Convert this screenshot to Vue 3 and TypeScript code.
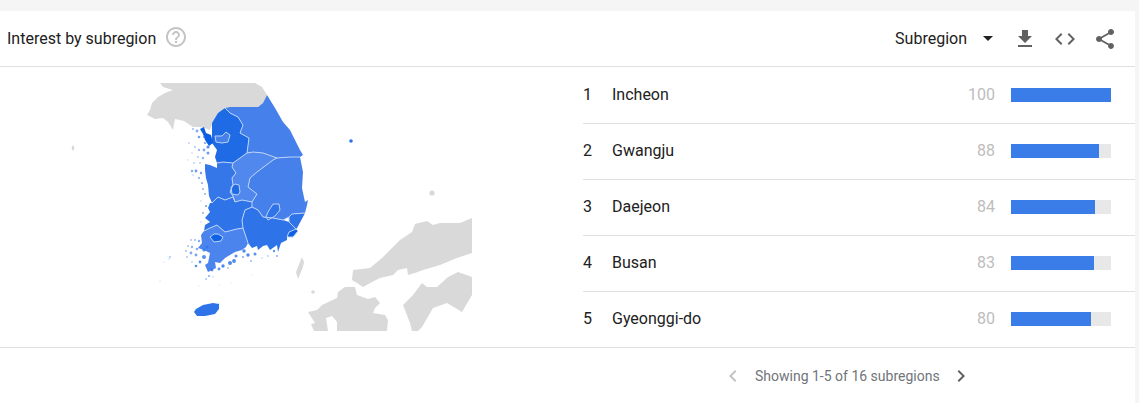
<script setup lang="ts">
interface Row { rank: number; name: string; value: number }
const rows: Row[] = [
  { rank: 1, name: 'Incheon', value: 100 },
  { rank: 2, name: 'Gwangju', value: 88 },
  { rank: 3, name: 'Daejeon', value: 84 },
  { rank: 4, name: 'Busan', value: 83 },
  { rank: 5, name: 'Gyeonggi-do', value: 80 },
]
const specks: [number, number, number, number][] = [
  [197,131,1.4,.6],[193,129,1,.5],[199,137,1.3,.7],[204,137,1,.7],[208,147,1.6,.8],[205,143,1,.7],[189,143,.9,.35],[195,147,1.1,.4],[199,150,1.2,.5],[204,150,1.4,.6],
  [208,153,1.5,.7],[192,153,.8,.3],[198,157,1,.4],[203,158,1.2,.55],[188,160,.7,.3],[194,163,.9,.35],[200,163,.9,.4],[192,171,1.2,.6],[196,171,1.4,.7],[201,173,1.2,.7],
  [193,175,.8,.4],[199,178,1.1,.6],[202,183,1,.6],[203,189,.9,.6],[205,194,.9,.6],[201,201,.7,.4],[206,206,1,.7],[203,213,.9,.6],[201,222,.7,.4],
  [191,240,.9,.45],[195,240,1,.5],[199,241,1.2,.6],[188,246,.9,.45],[192,247,1.2,.55],[197,249,1.3,.6],[186,251,1,.45],[191,253,1.4,.6],[196,255,1.4,.65],[187,257,.9,.45],
  [204,250,1.6,.8],[207,247,1.4,.75],[204,257,2,.8],[200,262,1.4,.8],[196,266,1.3,.8],[192,262,.8,.5],[170,257,.9,.45],[169,259,.7,.35],[168,256,.6,.3],
  [209,276,1.1,.55],[206,279,.9,.45],[212,270,1.4,.8],[219,269,1.4,.8],[223,266,1.7,.85],[213,277,.8,.35],[230,263,2,.85],[234,261,1.9,.85],[228,268,.9,.45],[236,256,1.5,.8],
  [244,251,1.7,.85],[248,255,1.7,.85],[243,257,1,.65],[255,254,1.5,.8],[251,261,.9,.55],[262,258,.7,.45],[268,256,.8,.55],[274,251,1.2,.75],[277,256,.9,.65],
  [160,281,.6,.3],[164,262,.6,.3],[199,286,.5,.3],[219,303,.6,.4],[219,285,.5,.3],[231,283,.5,.3],[252,275,.5,.3],
]
</script>

<template>
  <div class="page">
    <section class="card">
      <header class="head">
        <div class="title-wrap">
          <h2 class="title">Interest by subregion</h2>
          <svg class="icon help" viewBox="0 0 24 24"><path d="M11 18h2v-2h-2v2zm1-16C6.48 2 2 6.48 2 12s4.48 10 10 10 10-4.48 10-10S17.52 2 12 2zm0 18c-4.41 0-8-3.59-8-8s3.59-8 8-8 8 3.59 8 8-3.59 8-8 8zm0-14c-2.21 0-4 1.79-4 4h2c0-1.1.9-2 2-2s2 .9 2 2c0 2-3 1.75-3 5h2c0-2.25 3-2.5 3-5 0-2.21-1.79-4-4-4z"/></svg>
        </div>
        <div class="tools">
          <span class="select-label">Subregion</span>
          <span class="caret"></span>
          <svg class="icon tool" viewBox="0 0 24 24"><path d="M19 9h-4V3H9v6H5l7 7 7-7zM5 18v2h14v-2H5z"/></svg>
          <svg class="icon tool" viewBox="0 0 24 24"><path d="M9.4 16.6L4.8 12l4.6-4.6L8 6l-6 6 6 6 1.4-1.4zm5.2 0l4.6-4.6-4.6-4.6L16 6l6 6-6 6-1.4-1.4z"/></svg>
          <svg class="icon tool" viewBox="0 0 24 24"><path d="M18 16.08c-.76 0-1.44.3-1.96.77L8.91 12.7c.05-.23.09-.46.09-.7s-.04-.47-.09-.7l7.05-4.11c.54.5 1.25.81 2.04.81 1.66 0 3-1.34 3-3s-1.34-3-3-3-3 1.34-3 3c0 .24.04.47.09.7L8.04 9.81C7.5 9.31 6.79 9 6 9c-1.66 0-3 1.34-3 3s1.34 3 3 3c.79 0 1.5-.31 2.04-.81l7.12 4.16c-.05.21-.08.43-.08.65 0 1.61 1.31 2.92 2.92 2.92 1.61 0 2.92-1.31 2.92-2.92s-1.31-2.92-2.92-2.92z"/></svg>
        </div>
      </header>

      <div class="body">
        <div class="map-cell">
          <svg class="map" viewBox="0 67 583 280" width="583" height="280">
            <g fill="#d9d9d9">
              <path d="M160 83L255 83L262 87L267 95L263 103L258 107L230 107L225 108L220 113L212 125L210 130L205 128L199 127L193 127L184 121L175 119L173 130L168 122L163 118L155 119L147 115L150 110L152 103L158 97L165 93L173 90L163 87Z"/>
              <path d="M472 218L460 223L440 223L433 225L427 221L415 224L412 232L400 240L390 250L382 258L370 268L353 270L352 280L357 283L363 287L372 282L380 278L393 275L398 270L407 268L408 275L415 273L423 270L440 265L457 258L472 253Z"/>
              <path d="M472 277L458 272L448 277L437 287L427 287L422 283L413 295L403 305L410 323L412 331L418 331L422 327L433 308L447 303L462 312L472 295Z"/>
              <path d="M355 287L345 287L338 292L337 298L322 305L317 310L308 312L315 323L311 324L314 331L328 331L326 318L332 316L337 322L337 331L387 331L388 320L385 315L373 313L375 308L380 303L375 297L368 299L357 295Z"/>
              <path d="M302 257L304 262L303 267L298 279L296 272L300 262Z"/>
              <circle cx="432" cy="193" r="2.6"/>
              <circle cx="313" cy="292" r="1.8"/>
              <ellipse cx="73" cy="148" rx="1.3" ry="2.6"/>
            </g>
            <g>
              <path fill="#4680ea" d="M225 108L230 107L258 107L263 103L267 95L275 108L283 122L290 130L295 140L300 150L303 155L300 157L290 157L277 158L263 153L253 152L247 153L249 138L240 133L243 125L238 117L230 113Z"/>
              <path fill="#1f6be6" d="M225 108L230 113L238 117L243 125L240 133L249 138L247 153L233 163L223 162L217 163L215 157L217 150L212 143L212 123L218 113Z"/>
              <path fill="#4680ea" d="M277 158L290 157L300 157L303 172L302 188L305 202L308 200L307 205L305 213L292 214L289 217L283 220L273 218L263 217L258 210L252 207L252 202L257 194L248 187L250 178L257 172L273 160Z"/>
              <path fill="#5088ed" d="M247 153L253 152L263 153L277 158L273 160L257 172L250 178L248 187L257 194L252 202L242 200L235 202L233 196L230 192L233 185L232 178L236 173L232 167L233 163Z"/>
              <path fill="#3577e9" d="M217 163L223 162L233 163L232 167L236 173L232 178L233 185L230 192L233 196L235 202L233 197L225 200L218 197L212 203L209 196L208 185L206 178L205 170L205 164L210 165L217 168Z"/>
              <path fill="#2f73e8" d="M212 203L218 197L225 200L233 197L235 202L242 200L252 202L252 207L245 210L242 220L243 228L237 229L225 232L217 225L210 228L204 231L205 225L210 222L205 218L210 212L208 208L210 203Z"/>
              <path fill="#2f73e8" d="M245 210L252 207L258 210L263 217L273 218L283 220L289 222L296 229L293 237L287 237L287 240L281 243L278 252L277 245L270 250L267 245L263 246L258 250L257 246L252 248L248 243L243 228L242 220Z"/>
              <path fill="#4a84ec" d="M204 231L210 228L217 225L225 232L237 229L243 228L248 243L246 247L242 250L235 252L225 258L220 263L215 262L216 268L208 272L205 265L208 263L210 253L204 250L198 248L202 243L201 235Z"/>
              <path fill="#2f73e8" d="M289 217L292 214L305 213L303 217L297 228L296 229L289 222Z"/>
              <path fill="#0f62e6" d="M287 237L289 232L296 229L298 231L293 237Z"/>
              <path fill="#2f73e8" d="M268 212L273 204L279 204L280 210L275 216L268 220L266 217Z"/>
              <path fill="#1f6be6" d="M231 187L235 184L239 185L240 192L238 195L232 194Z"/>
              <path fill="#0f62e6" d="M210 237L214 234L218 234L223 237L221 241L214 242Z"/>
              <path fill="#4680ea" d="M215 136L222 136L226 132L230 135L228 142L222 143L216 142Z"/>
              <path fill="#0b5fe6" d="M200 129L204 127L206 133L211 135L213 143L209 146L205 140L203 134Z"/>
            </g>
            <g class="borders">
              <path d="M225 108L230 113L238 117L243 125L240 133L249 138L247 153L233 163L223 162L217 163"/>
              <path d="M247 153L253 152L263 153L277 158L290 157L300 157"/>
              <path d="M277 158L273 160L257 172L250 178L248 187L257 194L252 202L252 207L258 210L263 217L273 218L283 220L289 217L292 214L305 213"/>
              <path d="M233 163L232 167L236 173L232 178L233 185L230 192L233 196L235 202L242 200L252 202"/>
              <path d="M212 203L218 197L225 200L233 197L235 202"/>
              <path d="M252 207L245 210L242 220L243 228L248 243"/>
              <path d="M204 231L210 228L217 225L225 232L237 229L243 228"/>
              <path d="M289 217L289 222L296 229"/>
              <path d="M287 237L289 232L296 229L298 231L293 237Z"/>
              <path d="M268 212L273 204L279 204L280 210L275 216L268 220L266 217Z"/>
              <path d="M231 187L235 184L239 185L240 192L238 195L232 194Z"/>
              <path d="M210 237L214 234L218 234L223 237L221 241L214 242Z"/>
              <path d="M215 136L222 136L226 132L230 135L228 142L222 143L216 142Z"/>
            </g>
            <g fill="#2f73e8">
              <path d="M194 312L196 309L203 305L213 303L219 304L219 309L215 314L205 316L197 316Z"/>
              <circle cx="351" cy="141" r="1.8"/>
              <circle v-for="(s, i) in specks" :key="i" :cx="s[0]" :cy="s[1]" :r="s[2]" :opacity="s[3]"/>
            </g>
          </svg>
        </div>

        <ol class="list">
          <li v-for="row in rows" :key="row.rank" class="row">
            <span class="rank">{{ row.rank }}</span>
            <span class="name">{{ row.name }}</span>
            <span class="value">{{ row.value }}</span>
            <span class="track"><span class="fill" :style="{ width: row.value + '%' }"></span></span>
          </li>
        </ol>
      </div>

      <footer class="foot">
        <svg class="icon prev" viewBox="0 0 24 24"><path d="M15.41 7.41L14 6l-6 6 6 6 1.41-1.41L10.83 12z"/></svg>
        <span class="showing">Showing 1-5 of 16 subregions</span>
        <svg class="icon next" viewBox="0 0 24 24"><path d="M10 6L8.59 7.41 13.17 12l-4.58 4.59L10 18l6-6z"/></svg>
      </footer>
    </section>
  </div>
</template>

<style>
html, body { margin: 0; background: #f5f5f5; overflow: hidden; }
</style>

<style scoped>
.page {
  height: 403px;
  box-sizing: border-box;
  padding: 11px 4px 0 0;
  font-family: Roboto, "Liberation Sans", sans-serif;
  color: #212121;
}
.card { background: #fff; height: 392px; }
.head {
  height: 55px;
  border-bottom: 1px solid #e0e0e0;
  display: flex;
  align-items: center;
  justify-content: space-between;
  padding: 0 18px 0 7px;
}
.title-wrap { display: flex; align-items: center; }
.title { margin: 0; font-size: 16px; font-weight: 400; }
.icon { width: 24px; height: 24px; display: block; flex: none; }
.help { fill: #c4c4c4; margin-left: 8px; margin-top: -3px; }
.tools { display: flex; align-items: center; }
.select-label { font-size: 16px; }
.caret {
  width: 0; height: 0;
  margin: 0 20px 0 16px;
  border-left: 5px solid transparent;
  border-right: 5px solid transparent;
  border-top: 5px solid #212121;
}
.tool { fill: #616161; margin-left: 16px; margin-top: 1px; }
.caret + .tool { margin-left: 0; }
.body { display: flex; height: 280px; }
.map-cell { flex: 0 0 583px; }
.map { display: block; filter: blur(.35px); }
.borders { fill: none; stroke: #bcd2f8; stroke-width: 1; stroke-linejoin: round; }
.list { flex: 1; margin: 0; padding: 1px 0 0; list-style: none; }
.row {
  height: 56px;
  box-sizing: border-box;
  display: flex;
  align-items: center;
  padding: 0 24px 2px 0;
  font-size: 16px;
  border-bottom: 1px solid #e0e0e0;
}
.row:last-child { border-bottom-color: transparent; }
.rank { width: 29px; }
.name { flex: 1; }
.value { color: #bdbdbd; font-size: 16px; margin-right: 16px; }
.track { width: 100px; height: 14px; background: #e8e8e8; display: block; }
.fill { display: block; height: 100%; background: #3a7de8; }
.foot {
  border-top: 1px solid #e0e0e0;
  display: flex;
  align-items: center;
  height: 56px;
  padding-left: 721px;
}
.prev { fill: #c4c4c4; }
.next { fill: #5f6368; }
.showing { margin: 0 9px 0 10px; font-size: 14px; color: #70757a; }
</style>
